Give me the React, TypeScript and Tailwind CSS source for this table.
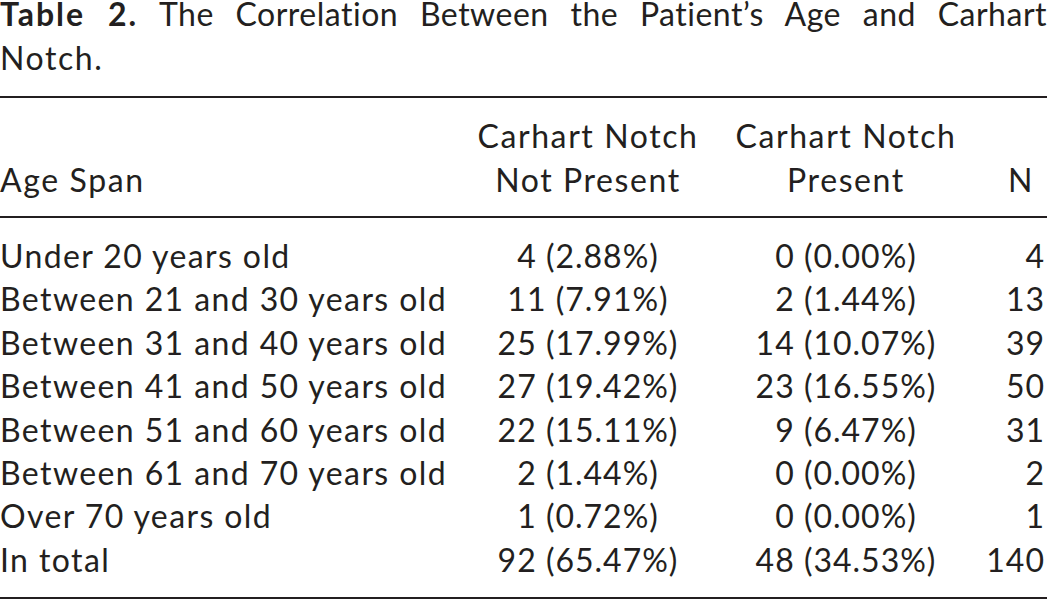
const rows = [
  ["Under 20 years old", "4 (2.88%)", "0 (0.00%)", "4"],
  ["Between 21 and 30 years old", "11 (7.91%)", "2 (1.44%)", "13"],
  ["Between 31 and 40 years old", "25 (17.99%)", "14 (10.07%)", "39"],
  ["Between 41 and 50 years old", "27 (19.42%)", "23 (16.55%)", "50"],
  ["Between 51 and 60 years old", "22 (15.11%)", "9 (6.47%)", "31"],
  ["Between 61 and 70 years old", "2 (1.44%)", "0 (0.00%)", "2"],
  ["Over 70 years old", "1 (0.72%)", "0 (0.00%)", "1"],
  ["In total", "92 (65.47%)", "48 (34.53%)", "140"],
]

const cols = "grid grid-cols-[460px_256px_260px_1fr]"

export default function App() {
  return (
    <div className="w-[1047px] h-[601px] overflow-hidden bg-white text-[#231f20] font-['Lato',sans-serif] text-[32px] leading-[44px]">
      <p className="leading-[28px] text-justify [text-align-last:justify] tracking-[0.5px]">
        <span className="font-bold tracking-[2px]">Table 2.</span> The Correlation Between the Patient’s Age and Carhart
      </p>
      <p className="leading-[60px] tracking-[1.6px]">Notch.</p>

      <div className="mt-[8px] border-t-2 border-[#231f20]" />

      <div className={`${cols} pt-[16px] pb-[14px] items-end tracking-[1.6px]`}>
        <div>Age Span</div>
        <div className="text-center">Carhart Notch<br />Not Present</div>
        <div className="text-center">Carhart Notch<br />Present</div>
        <div className="text-right pr-[13px]">N</div>
      </div>

      <div className="border-t-2 border-[#231f20]" />

      <div className="pt-[16px] leading-[43.4px]">
        {rows.map((r) => (
          <div key={r[0]} className={cols}>
            <div className="tracking-[1.4px]">{r[0]}</div>
            <div className="text-center tracking-[1px]">{r[1]}</div>
            <div className="text-center tracking-[1px]">{r[2]}</div>
            <div className="text-right pr-[2px] tracking-[1px]">{r[3]}</div>
          </div>
        ))}
      </div>

      <div className="mt-[16px] border-t-2 border-[#231f20]" />
    </div>
  )
}
